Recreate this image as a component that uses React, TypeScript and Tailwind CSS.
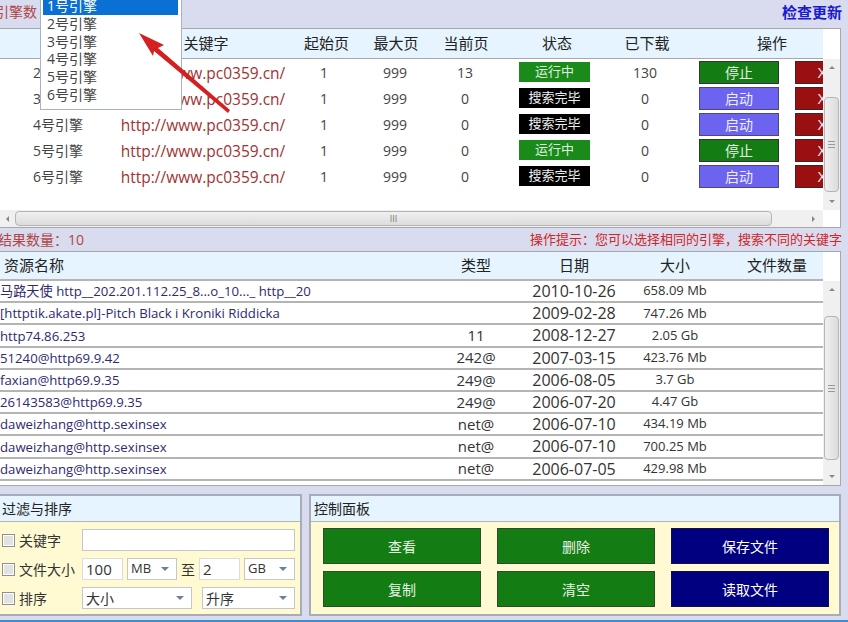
const font = { fontFamily: '"Open Sans","Noto Sans CJK SC",sans-serif' };

const engines = [
  { n: '2号引擎', cur: '13', run: true, dl: '130' },
  { n: '3号引擎', cur: '0', run: false, dl: '0' },
  { n: '4号引擎', cur: '0', run: false, dl: '0' },
  { n: '5号引擎', cur: '0', run: true, dl: '0' },
  { n: '6号引擎', cur: '0', run: false, dl: '0' },
];

const results = [
  ['马路天使 http__202.201.112.25_8...o_10..._ http__20', '', '2010-10-26', '658.09 Mb'],
  ['[httptik.akate.pl]-Pitch Black i Kroniki Riddicka', '', '2009-02-28', '747.26 Mb'],
  ['http74.86.253', '11', '2008-12-27', '2.05 Gb'],
  ['51240@http69.9.42', '242@', '2007-03-15', '423.76 Mb'],
  ['faxian@http69.9.35', '249@', '2006-08-05', '3.7 Gb'],
  ['26143583@http69.9.35', '249@', '2006-07-20', '4.47 Gb'],
  ['daweizhang@http.sexinsex', 'net@', '2006-07-10', '434.19 Mb'],
  ['daweizhang@http.sexinsex', 'net@', '2006-07-10', '700.25 Mb'],
  ['daweizhang@http.sexinsex', 'net@', '2006-07-05', '429.98 Mb'],
];

function VScroll({ thumbTop, thumbH }: { thumbTop: number; thumbH: number }) {
  return (
    <div className="w-[17px] flex-1 min-h-0 bg-[#f0f0f0] flex flex-col items-center text-[#777]">
      <div className="h-[17px] shrink-0 flex items-center justify-center">
        <div className="w-0 h-0 border-x-[3px] border-x-transparent border-b-[3px] border-b-[#888]" />
      </div>
      <div className="flex-1 w-full relative">
        <div className="absolute left-[1px] right-[1px] rounded-sm border border-[#b5b5b5] bg-gradient-to-r from-[#f0f0f0] to-[#dcdcdc] flex items-center justify-center" style={{ top: thumbTop, height: thumbH }}>
          <div className="w-[7px] h-[7px] border-y border-[#999] flex items-center"><div className="w-full h-px bg-[#999]" /></div>
        </div>
      </div>
      <div className="h-[17px] shrink-0 flex items-center justify-center">
        <div className="w-0 h-0 border-x-[3px] border-x-transparent border-t-[3px] border-t-[#888]" />
      </div>
    </div>
  );
}

function Sel({ label, className }: { label: string; className: string }) {
  return (
    <div className={`h-[22px] bg-white border border-[#c3c6cc] flex items-center justify-between pl-[3px] pr-[7px] text-[#333] ${className}`}>
      <span>{label}</span>
      <div className="w-0 h-0 border-x-[4px] border-x-transparent border-t-[4px] border-t-[#6b7f9e]" />
    </div>
  );
}

function Check() {
  return <div className="w-[13px] h-[13px] border border-[#8e8f8f] bg-[#e2e2e2] shrink-0 outline outline-1 outline-white -outline-offset-2" />;
}

function Btn({ t, navy }: { t: string; navy?: boolean }) {
  return (
    <div className={`h-[36px] border flex items-center justify-center text-[14px] w-[158px] ${navy ? 'bg-[#000080] border-[#10104a] text-white' : 'bg-[#137d13] border-[#2f4a2f] text-[#e8f3e8]'}`}>
      {t}
    </div>
  );
}

export default function App() {
  return (
    <div style={font} className="w-[848px] h-[622px] overflow-hidden bg-[#d9dbee] relative flex flex-col">
      {/* top strip */}
      <div className="h-[28px] shrink-0 flex items-start justify-between pr-[6px] pt-[1px]">
        <span className="-ml-[5px] text-[14px] text-[#b04646]">引擎数</span>
        <span className="text-[15px] font-bold text-[#1a1ad0]">检查更新</span>
      </div>

      {/* engine panel */}
      <div className="w-[841px] h-[200px] shrink-0 bg-white border-y border-r border-[#a8a8a8] flex flex-col">
        <div className="flex-1 min-h-0 flex">
          <div className="w-[823px] shrink-0 flex flex-col overflow-hidden">
            <div className="h-[30px] shrink-0 bg-[#e5f4fe] border-b border-[#a8a8a8] flex items-center text-[15px] text-[#222] text-center">
              <div className="w-[120px]" />
              <div className="w-[172px]">关键字</div>
              <div className="w-[69px]">起始页</div>
              <div className="w-[70px]">最大页</div>
              <div className="w-[70px]">当前页</div>
              <div className="w-[112px]">状态</div>
              <div className="w-[68px]">已下载</div>
              <div className="flex-1 pl-[40px]">操作</div>
            </div>
            {engines.map((e) => (
              <div key={e.n} className="h-[26px] shrink-0 flex items-center text-center text-[14px] text-[#444]">
                <div className="w-[118px] pl-[33px] text-left">{e.n}</div>
                <div className="w-[170px] pt-[3px] text-[15.5px] text-[#a23232]">http://www.pc0359.cn/</div>
                <div className="w-[72px]">1</div>
                <div className="w-[70px]">999</div>
                <div className="w-[70px]">{e.cur}</div>
                <div className="w-[110px] flex justify-center pr-[1px]">
                  <div className={`w-[71px] h-[20px] flex items-center justify-center text-[13px] ${e.run ? 'bg-[#1a8a1a] text-[#dff2df]' : 'bg-black text-[#eeeeee]'}`}>
                    {e.run ? '运行中' : '搜索完毕'}
                  </div>
                </div>
                <div className="w-[70px]">{e.dl}</div>
                <div className="flex-1 flex pl-[19px] gap-[16px] overflow-hidden">
                  <div className={`w-[80px] h-[23px] shrink-0 border flex items-center justify-center text-[14px] ${e.run ? 'bg-[#137d13] text-[#e8f3e8] border-[#33333a]' : 'bg-[#6c63f0] text-[#eeeeff] border-[#4a4a7a]'}`}>
                    {e.run ? '停止' : '启动'}
                  </div>
                  <div className="w-[54px] h-[23px] shrink-0 border border-[#4a2020] bg-[#9a1010] text-[#eee] text-[15px] flex items-center justify-center">X</div>
                </div>
              </div>
            ))}
          </div>
          <div className="w-[17px] shrink-0 flex flex-col">
            <div className="h-[30px] shrink-0" />
            <VScroll thumbTop={21} thumbH={95} />
          </div>
        </div>
        {/* horizontal scrollbar */}
        <div className="h-[17px] shrink-0 w-[823px] bg-[#f0f0f0] flex items-center">
          <div className="w-[15px] flex justify-center">
            <div className="w-0 h-0 border-y-[3px] border-y-transparent border-r-[3px] border-r-[#888]" />
          </div>
          <div className="w-[757px] h-[15px] rounded-sm border border-[#b5b5b5] bg-gradient-to-b from-[#f0f0f0] to-[#dcdcdc] flex items-center justify-center">
            <span className="text-[9px] leading-none text-[#777]">III</span>
          </div>
          <div className="flex-1 flex justify-end pr-[8px]">
            <div className="w-0 h-0 border-y-[3px] border-y-transparent border-l-[3px] border-l-[#888]" />
          </div>
        </div>
      </div>

      {/* middle strip */}
      <div className="h-[23px] shrink-0 flex items-center justify-between pr-[6px]">
        <span className="-ml-[2px] text-[14px] text-[#b04646]">结果数量：10</span>
        <span className="text-[13px] text-[#d02626]">操作提示：您可以选择相同的引擎，搜索不同的关键字</span>
      </div>

      {/* result panel */}
      <div className="w-[841px] h-[235px] shrink-0 bg-white border-y border-r border-[#a8a8a8] flex">
        <div className="w-[823px] shrink-0 flex flex-col">
          <div className="h-[29px] shrink-0 bg-[#e5f4fe] border-b-2 border-[#b4b4b4] flex items-center text-[15px] text-[#222] text-center">
            <div className="w-[431px] pl-[4px] text-left">资源名称</div>
            <div className="w-[90px]">类型</div>
            <div className="w-[106px]">日期</div>
            <div className="w-[96px]">大小</div>
            <div className="flex-1 pl-[8px]">文件数量</div>
          </div>
          {results.map((r, i) => (
            <div key={i} className="h-[22.2px] shrink-0 border-b-2 border-[#b4b4b4] flex items-center text-center text-[15px] text-[#333]">
              <div className="w-[431px] pt-[2px] text-left text-[13.2px] text-[#2e2a6e] whitespace-nowrap">{r[0]}</div>
              <div className="w-[90px]">{r[1]}</div>
              <div className="w-[106px] text-[16px]">{r[2]}</div>
              <div className="w-[96px] text-[13px]">{r[3]}</div>
            </div>
          ))}
        </div>
        <div className="w-[17px] shrink-0 flex flex-col">
          <div className="h-[29px] shrink-0" />
          <VScroll thumbTop={18} thumbH={144} />
        </div>
      </div>

      {/* bottom */}
      <div className="flex gap-[7px] mt-[8px] w-[841px] h-[122px] shrink-0">
        <div className="w-[302px] shrink-0 border-y-2 border-r-2 border-[#a8abb8] bg-[#fffad2] flex flex-col">
          <div className="h-[26px] shrink-0 bg-[#e5f4fe] border-b border-[#b4b4b4] flex items-center pl-[2px] text-[14px] text-[#222]">过滤与排序</div>
          <div className="flex-1 flex flex-col gap-[7px] pt-[7px] pl-[2px] text-[14px] text-[#333]">
            <div className="flex items-center h-[22px]">
              <Check />
              <span className="w-[67px] pl-[4px] shrink-0">关键字</span>
              <div className="w-[213px] h-[22px] bg-white border border-[#c3c6cc]" />
            </div>
            <div className="flex items-center h-[22px]">
              <Check />
              <span className="w-[67px] pl-[4px] shrink-0 whitespace-nowrap">文件大小</span>
              <div className="w-[41px] h-[22px] bg-white border border-[#dcdcdc] pl-[3px] leading-[20px] text-[15px]">100</div>
              <Sel label="MB" className="w-[50px] ml-[4px] text-[13px]" />
              <span className="w-[22px] text-center">至</span>
              <div className="w-[41px] h-[22px] bg-white border border-[#dcdcdc] pl-[3px] leading-[20px] text-[15px]">2</div>
              <Sel label="GB" className="w-[51px] ml-[4px] text-[13px]" />
            </div>
            <div className="flex items-center h-[22px]">
              <Check />
              <span className="w-[67px] pl-[4px] shrink-0">排序</span>
              <Sel label="大小" className="w-[110px] text-[14px]" />
              <Sel label="升序" className="w-[93px] ml-[10px] text-[14px]" />
            </div>
          </div>
        </div>
        <div className="flex-1 border-2 border-[#a8abb8] bg-[#fffad2] flex flex-col">
          <div className="h-[26px] shrink-0 bg-[#e5f4fe] border-b border-[#b4b4b4] flex items-center pl-[3px] text-[14px] text-[#222]">控制面板</div>
          <div className="pt-[6px] pl-[12px] grid grid-cols-[158px_158px_158px] gap-x-[16px] gap-y-[7px]">
            <Btn t="查看" />
            <Btn t="删除" />
            <Btn t="保存文件" navy />
            <Btn t="复制" />
            <Btn t="清空" />
            <Btn t="读取文件" navy />
          </div>
        </div>
      </div>
      <div className="absolute left-0 right-0 bottom-0 h-[2px] bg-[#3a8ed6]" />

      {/* dropdown overlay */}
      <div className="absolute left-[40px] top-0 w-[142px] h-[110px] bg-white border border-t-0 border-[#a9b2bf] pl-[2px] pr-[3px] text-[14px] text-[#444] leading-[17.7px]">
        <div className="h-[15px] bg-[#0a70d4] text-white pl-[4px] leading-[12px] overflow-hidden">1号引擎</div>
        {['2号引擎', '3号引擎', '4号引擎', '5号引擎', '6号引擎'].map((t) => (
          <div key={t} className="pl-[4px] h-[17.7px]">{t}</div>
        ))}
      </div>

      {/* red arrow annotation */}
      <svg className="absolute left-0 top-0 pointer-events-none" width="848" height="622">
        <polygon points="139,33 164,45 158,48 230,110 228,113 154,51 153,56" fill="#d42020" />
      </svg>
    </div>
  );
}
